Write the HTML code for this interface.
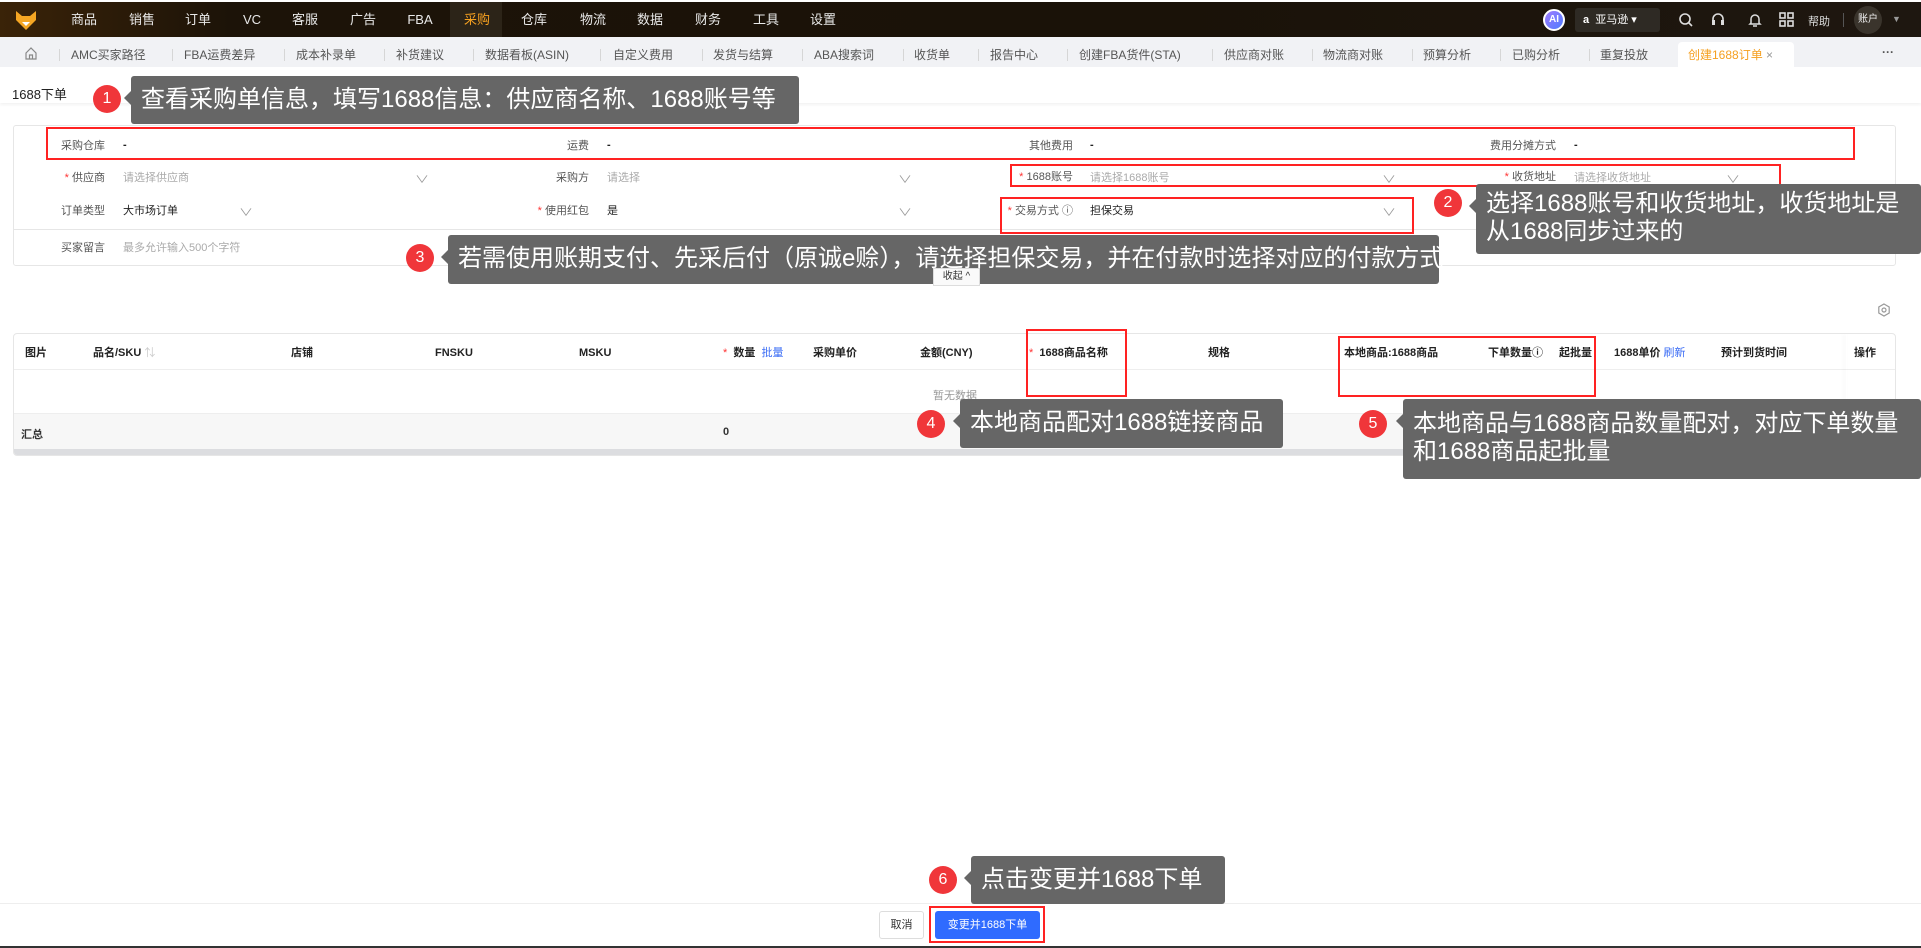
<!DOCTYPE html>
<html><head><meta charset="utf-8">
<style>
*{margin:0;padding:0;box-sizing:border-box}
body{width:1921px;height:948px;position:relative;overflow:hidden;background:#fff;font-family:"Liberation Sans","Noto Sans CJK SC",sans-serif;color:#333}
.a{position:absolute;white-space:nowrap}
.nav{left:0;top:2px;width:1921px;height:35px;background:linear-gradient(90deg,#3a2308 0%,#1c1308 12%,#1a1208 60%,#1e1710 100%)}
.ni{top:11px;height:18px;line-height:18px;font-size:13px;color:#e8e8e8;transform:translateX(-50%)}
.tabs{left:0;top:37px;width:1921px;height:30px;background:#f1f2f5}
.tb{top:47px;line-height:16px;font-size:12px;color:#555}
.sep{top:49px;width:1px;height:12px;background:#d6d6d6}
.lbl{font-size:11px;color:#555;text-align:right;line-height:14px}
.val{font-size:11px;color:#222;line-height:14px}
.ph{font-size:11px;color:#aaa;line-height:14px}
.chev{font-size:10px;color:#999;transform:scaleX(1.4)}
.req{color:#f33}
.th{top:346px;line-height:14px;font-size:11px;font-weight:bold;color:#222}
.ann{background:#666;color:#fff;font-size:24px;border-radius:3px;line-height:28px}
.ann:before{content:"";position:absolute;left:-7px;top:15px;border:7px solid transparent;border-left:0;border-right-color:#666}
.cir{width:28px;height:28px;border-radius:50%;background:#f0363a;color:#fff;font-size:16px;text-align:center;line-height:28px;transform:translate(-50%,-50%)}
.rb{border:2px solid #f22}
</style></head><body>
<div class="a nav"></div>
<svg class="a" style="left:14px;top:8px" width="24" height="24" viewBox="0 0 24 24"><path d="M2 3 L8 8 L16 8 L22 3 L22 12 L12 22 L2 12Z" fill="#f5a623"/><path d="M8 14 L12 18 L16 14Z" fill="#fff"/></svg>
<div class="a" style="left:450px;top:2px;width:52px;height:35px;background:#2c2418"></div>
<div class="a ni" style="left:84px">商品</div><div class="a ni" style="left:142px">销售</div><div class="a ni" style="left:198px">订单</div><div class="a ni" style="left:252px">VC</div><div class="a ni" style="left:305px">客服</div><div class="a ni" style="left:363px">广告</div><div class="a ni" style="left:420px">FBA</div><div class="a ni" style="left:477px;color:#f5a020">采购</div><div class="a ni" style="left:534px">仓库</div><div class="a ni" style="left:593px">物流</div><div class="a ni" style="left:650px">数据</div><div class="a ni" style="left:708px">财务</div><div class="a ni" style="left:766px">工具</div><div class="a ni" style="left:823px">设置</div>
<div class="a" style="left:1543px;top:9px;width:22px;height:22px;border-radius:50%;background:linear-gradient(135deg,#9f7bff,#4f7bff);border:2px solid #fff;color:#fff;font-size:10px;font-weight:bold;text-align:center;line-height:18px">AI</div>
<div class="a" style="left:1575px;top:8px;width:85px;height:24px;background:#2e2a24;border-radius:3px;color:#fff;font-size:11px;line-height:24px;padding-left:8px"><b>a</b>&nbsp; 亚马逊 ▾</div>
<svg class="a" style="left:1678px;top:12px" width="16" height="16"><circle cx="7" cy="7" r="5" stroke="#ddd" stroke-width="1.6" fill="none"/><path d="M11 11l3 3" stroke="#ddd" stroke-width="1.6"/></svg>
<svg class="a" style="left:1710px;top:11px" width="16" height="17"><path d="M3 10V8a5 5 0 0110 0v2" stroke="#ddd" stroke-width="1.6" fill="none"/><rect x="2" y="9" width="3" height="5" fill="#ddd"/><rect x="11" y="9" width="3" height="5" fill="#ddd"/></svg>
<svg class="a" style="left:1747px;top:11px" width="16" height="17"><path d="M4 12V8a4 4 0 018 0v4l1 1H3z" stroke="#ddd" stroke-width="1.5" fill="none"/><path d="M6 15h4" stroke="#ddd" stroke-width="1.5"/></svg>
<svg class="a" style="left:1779px;top:12px" width="15" height="15"><g fill="none" stroke="#ddd" stroke-width="1.6"><rect x="1" y="1" width="5" height="5"/><rect x="9" y="1" width="5" height="5"/><rect x="1" y="9" width="5" height="5"/><rect x="9" y="9" width="5" height="5"/></g></svg>
<div class="a" style="left:1808px;top:13px;font-size:11px;color:#ddd">帮助</div>
<div class="a" style="left:1843px;top:13px;width:1px;height:14px;background:#555"></div>
<div class="a" style="left:1854px;top:6px;width:28px;height:28px;border-radius:50%;background:#3a342c;color:#eee;font-size:10px;text-align:center;line-height:28px">账户</div>
<div class="a" style="left:1892px;top:14px;font-size:9px;color:#999">▼</div>

<div class="a tabs"></div>
<svg class="a" style="left:24px;top:46px" width="14" height="14"><path d="M2 7L7 2l5 5v6H2z M5.5 13V9h3v4" fill="none" stroke="#888" stroke-width="1.2"/></svg>
<div class="a sep" style="left:59px"></div>
<div class="a tb" style="left:71px">AMC买家路径</div><div class="a sep" style="left:172px"></div>
<div class="a tb" style="left:184px">FBA运费差异</div><div class="a sep" style="left:284px"></div>
<div class="a tb" style="left:296px">成本补录单</div><div class="a sep" style="left:384px"></div>
<div class="a tb" style="left:396px">补货建议</div><div class="a sep" style="left:473px"></div>
<div class="a tb" style="left:485px">数据看板(ASIN)</div><div class="a sep" style="left:600px"></div>
<div class="a tb" style="left:613px">自定义费用</div><div class="a sep" style="left:702px"></div>
<div class="a tb" style="left:713px">发货与结算</div><div class="a sep" style="left:802px"></div>
<div class="a tb" style="left:814px">ABA搜索词</div><div class="a sep" style="left:903px"></div>
<div class="a tb" style="left:914px">收货单</div><div class="a sep" style="left:978px"></div>
<div class="a tb" style="left:990px">报告中心</div><div class="a sep" style="left:1067px"></div>
<div class="a tb" style="left:1079px">创建FBA货件(STA)</div><div class="a sep" style="left:1212px"></div>
<div class="a tb" style="left:1224px">供应商对账</div><div class="a sep" style="left:1312px"></div>
<div class="a tb" style="left:1323px">物流商对账</div><div class="a sep" style="left:1412px"></div>
<div class="a tb" style="left:1423px">预算分析</div><div class="a sep" style="left:1500px"></div>
<div class="a tb" style="left:1512px">已购分析</div><div class="a sep" style="left:1589px"></div>
<div class="a tb" style="left:1600px">重复投放</div>
<div class="a" style="left:1678px;top:42px;width:116px;height:25px;background:#fff;border-radius:4px 4px 0 0"></div>
<div class="a tb" style="left:1688px;color:#f5a020">创建1688订单 <span style="color:#999">×</span></div>
<div class="a tb" style="left:1882px;top:44px;font-weight:bold">···</div>

<div class="a" style="left:0;top:67px;width:1921px;height:36px;background:#fff;box-shadow:0 2px 3px rgba(0,0,0,.05)"></div>
<div class="a" style="left:12px;top:84px;font-size:13px;color:#222">1688下单</div>

<!-- form -->
<div class="a" style="left:13px;top:125px;width:1883px;height:141px;border:1px solid #e6e6e6;border-radius:3px"></div>
<div class="a" style="left:13px;top:229px;width:1883px;height:1px;background:#e6e6e6"></div>
<div class="a lbl" style="left:40px;top:139px;width:65px">采购仓库</div><div class="a val" style="left:123px;top:138px;font-weight:bold">-</div>
<div class="a lbl" style="left:520px;top:139px;width:69px">运费</div><div class="a val" style="left:607px;top:138px;font-weight:bold">-</div>
<div class="a lbl" style="left:1000px;top:139px;width:73px">其他费用</div><div class="a val" style="left:1090px;top:138px;font-weight:bold">-</div>
<div class="a lbl" style="left:1480px;top:139px;width:76px">费用分摊方式</div><div class="a val" style="left:1574px;top:138px;font-weight:bold">-</div>

<div class="a lbl" style="left:40px;top:171px;width:65px"><span class="req">* </span>供应商</div><div class="a ph" style="left:123px;top:171px">请选择供应商</div><div class="a chev" style="left:417px;top:171px">∨</div>
<div class="a lbl" style="left:520px;top:171px;width:69px">采购方</div><div class="a ph" style="left:607px;top:171px">请选择</div><div class="a chev" style="left:900px;top:171px">∨</div>
<div class="a lbl" style="left:1000px;top:170px;width:73px"><span class="req">* </span>1688账号</div><div class="a ph" style="left:1090px;top:171px">请选择1688账号</div><div class="a chev" style="left:1384px;top:171px">∨</div>
<div class="a lbl" style="left:1480px;top:170px;width:76px"><span class="req">* </span>收货地址</div><div class="a ph" style="left:1574px;top:171px">请选择收货地址</div><div class="a chev" style="left:1728px;top:171px">∨</div>

<div class="a lbl" style="left:40px;top:204px;width:65px">订单类型</div><div class="a val" style="left:123px;top:204px">大市场订单</div><div class="a chev" style="left:241px;top:204px">∨</div>
<div class="a lbl" style="left:520px;top:204px;width:69px"><span class="req">* </span>使用红包</div><div class="a val" style="left:607px;top:204px">是</div><div class="a chev" style="left:900px;top:204px">∨</div>
<div class="a lbl" style="left:1000px;top:204px;width:73px"><span class="req">* </span>交易方式 ⓘ</div><div class="a val" style="left:1090px;top:204px">担保交易</div><div class="a chev" style="left:1384px;top:204px">∨</div>

<div class="a lbl" style="left:40px;top:241px;width:65px">买家留言</div><div class="a ph" style="left:123px;top:241px">最多允许输入500个字符</div><div class="a" style="left:866px;top:244px;font-size:11px;color:#555">0/500</div>
<div class="a lbl" style="left:1000px;top:241px;width:73px">备注</div><div class="a val" style="left:1090px;top:241px">-</div>

<!-- table -->
<svg class="a" style="left:1877px;top:303px" width="14" height="14"><path d="M7 1l5.2 3v6L7 13l-5.2-3V4z" fill="none" stroke="#999" stroke-width="1.2"/><circle cx="7" cy="7" r="2" fill="none" stroke="#999" stroke-width="1.2"/></svg>
<div class="a" style="left:13px;top:333px;width:1883px;height:123px;border:1px solid #e6e6e6;border-radius:4px;overflow:hidden">
 <div class="a" style="left:0;top:35px;width:1883px;height:1px;background:#eee"></div>
 <div class="a" style="left:0;top:79px;width:1883px;height:36px;background:#f7f7f7;border-top:1px solid #eee"></div>
 <div class="a" style="left:0;top:115px;width:1883px;height:8px;background:#dcdde0"></div>
 <div class="a" style="left:1832px;top:0;width:1px;height:115px;box-shadow:-2px 0 4px rgba(0,0,0,.08)"></div>
</div>
<div class="a th" style="left:25px">图片</div>
<div class="a th" style="left:93px">品名/SKU <span style="color:#ccc;font-weight:normal">⇅</span></div>
<div class="a th" style="left:291px">店铺</div>
<div class="a th" style="left:435px">FNSKU</div>
<div class="a th" style="left:579px">MSKU</div>
<div class="a th" style="left:723px"><span class="req" style="font-weight:normal">*</span>&nbsp; 数量 &nbsp;<span style="color:#3a6cf5;font-weight:normal">批量</span></div>
<div class="a th" style="left:813px">采购单价</div>
<div class="a th" style="left:920px">金额(CNY)</div>
<div class="a th" style="left:1029px"><span class="req" style="font-weight:normal">*</span>&nbsp; 1688商品名称</div>
<div class="a th" style="left:1208px">规格</div>
<div class="a th" style="left:1344px">本地商品:1688商品</div>
<div class="a th" style="left:1488px">下单数量ⓘ</div>
<div class="a th" style="left:1559px">起批量</div>
<div class="a th" style="left:1614px">1688单价 <span style="color:#3a6cf5;font-weight:normal">刷新</span></div>
<div class="a th" style="left:1721px">预计到货时间</div>
<div class="a th" style="left:1854px">操作</div>
<div class="a" style="left:933px;top:387px;font-size:11px;color:#999">暂无数据</div>
<div class="a" style="left:21px;top:426px;font-size:11px;font-weight:bold">汇总</div>
<div class="a" style="left:723px;top:426px;font-size:11px;font-weight:bold">0</div>

<!-- footer -->
<div class="a" style="left:0;top:903px;width:1921px;height:43px;background:#fff;border-top:1px solid #eee"></div>
<div class="a" style="left:879px;top:911px;width:45px;height:28px;border:1px solid #ddd;border-radius:3px;font-size:11px;text-align:center;line-height:26px">取消</div>
<div class="a" style="left:935px;top:911px;width:105px;height:28px;background:#2f6bff;border-radius:3px;color:#fff;font-size:11px;text-align:center;line-height:28px">变更并1688下单</div>
<div class="a" style="left:0;top:946px;width:1921px;height:2px;background:#333"></div>

<!-- red boxes -->
<div class="a rb" style="left:46px;top:127px;width:1809px;height:33px"></div>
<div class="a rb" style="left:1010px;top:164px;width:771px;height:23px"></div>
<div class="a rb" style="left:1000px;top:197px;width:414px;height:37px"></div>
<div class="a rb" style="left:1026px;top:329px;width:101px;height:68px"></div>
<div class="a rb" style="left:1338px;top:336px;width:258px;height:61px"></div>
<div class="a rb" style="left:929px;top:906px;width:116px;height:37px"></div>

<!-- annotations -->
<div class="a ann" style="left:131px;top:76px;width:668px;height:48px;padding:10px 10px">查看采购单信息，填写1688信息：供应商名称、1688账号等</div><div class="a cir" style="left:107px;top:99px">1</div>
<div class="a ann" style="left:1476px;top:184px;width:445px;height:70px;padding:6px 10px">选择1688账号和收货地址，收货地址是<br>从1688同步过来的</div><div class="a cir" style="left:1448px;top:203px">2</div>
<div class="a ann" style="left:448px;top:235px;width:991px;height:49px;padding:10px 10px">若需使用账期支付、先采后付（原诚e赊），请选择担保交易，并在付款时选择对应的付款方式</div><div class="a cir" style="left:420px;top:258px">3</div>
<div class="a" style="left:933px;top:268px;width:47px;height:18px;border:1px solid #ddd;background:#fafafa;font-size:10px;color:#333;text-align:center;line-height:16px">收起 ^</div>
<div class="a ann" style="left:960px;top:399px;width:323px;height:49px;padding:10px 10px">本地商品配对1688链接商品</div><div class="a cir" style="left:931px;top:424px">4</div>
<div class="a ann" style="left:1403px;top:399px;width:518px;height:80px;padding:11px 10px">本地商品与1688商品数量配对，对应下单数量<br>和1688商品起批量</div><div class="a cir" style="left:1373px;top:424px">5</div>
<div class="a ann" style="left:971px;top:856px;width:254px;height:48px;padding:10px 10px">点击变更并1688下单</div><div class="a cir" style="left:943px;top:880px">6</div>
</body></html>
